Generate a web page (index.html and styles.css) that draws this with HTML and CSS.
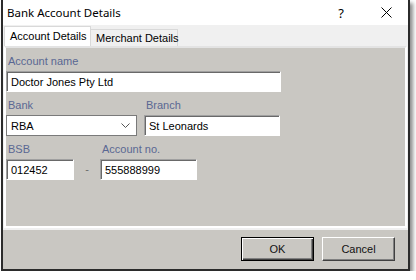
FILE: index.html
```html
<!DOCTYPE html>
<html lang="en">
<head>
    <meta charset="UTF-8">
    <title>Bank Account Details</title>
    <link rel="stylesheet" href="styles.css">
</head>
<body>
    <div class="window">
        <div class="titlebar">
            <span class="title">Bank Account Details</span>
            <span class="tb-btn help">?</span>
            <span class="tb-btn close">
                <svg width="11" height="11" viewBox="0 0 11 11"><path d="M0.5 0.5 L10.5 10.5 M10.5 0.5 L0.5 10.5" stroke="#000" stroke-width="1" fill="none"/></svg>
            </span>
        </div>

        <div class="tabs">
            <div class="tab active">Account Details</div>
            <div class="tab">Merchant Details</div>
        </div>

        <div class="panel">
            <div class="field">
                <label>Account name</label>
                <input class="text name" type="text" value="Doctor Jones Pty Ltd" readonly>
            </div>
            <div class="row">
                <div class="field">
                    <label>Bank</label>
                    <div class="select bank">
                        <span>RBA</span>
                        <svg width="9" height="5" viewBox="0 0 9 5"><path d="M0.5 0.5 L4.5 4.5 L8.5 0.5" stroke="#555" stroke-width="1" fill="none"/></svg>
                    </div>
                </div>
                <div class="field">
                    <label>Branch</label>
                    <input class="text branch" type="text" value="St Leonards" readonly>
                </div>
            </div>
            <div class="row">
                <div class="field">
                    <label>BSB</label>
                    <input class="text bsb" type="text" value="012452" readonly>
                </div>
                <span class="dash">-</span>
                <div class="field">
                    <label>Account no.</label>
                    <input class="text accno" type="text" value="555888999" readonly>
                </div>
            </div>
        </div>

        <div class="footer">
            <button class="btn default">OK</button>
            <button class="btn">Cancel</button>
        </div>
    </div>
</body>
</html>
```

FILE: styles.css
```css
body {
    margin: 0;
    padding-left: 1px;
    background-color: #fff;
    font-family: "Liberation Sans", Arial, sans-serif;
    font-size: 11px;
    color: #000;
}

.window {
    width: 409px;
    height: 271px;
    box-sizing: border-box;
    border: 2px solid #2b2b2b;
    border-top: none;
    background-color: #f0f0f0;
    box-shadow: 3px 3px 4px rgba(0,0,0,0.45);
    display: flex;
    flex-direction: column;
}

/* title bar */
.titlebar {
    height: 25px;
    background-color: #fff;
    display: flex;
    align-items: center;
}

.title {
    flex: 1;
    padding-left: 4px;
    font-family: "Noto Sans", sans-serif;
    font-size: 11.5px;
    color: #000;
}

.tb-btn {
    height: 25px;
    display: flex;
    align-items: center;
    justify-content: center;
}

.help {
    width: 46px;
    font-family: "Noto Sans", sans-serif;
    font-size: 13px;
}

.close {
    width: 44px;
}

/* tabs */
.tabs {
    height: 21px;
    padding-left: 1px;
    display: flex;
    align-items: flex-end;
}

.tab {
    width: 87px;
    box-sizing: border-box;
    border: 1px solid #d9d9d9;
    border-bottom: none;
    padding-left: 5px;
    white-space: nowrap;
}

.tab.active {
    height: 20px;
    line-height: 19px;
    background-color: #fff;
}

.tab:not(.active) {
    height: 17px;
    line-height: 17px;
    border-left: none;
    padding-left: 5px;
    background-color: #f0f0f0;
}

/* page */
.panel {
    height: 182px;
    margin: 0 1px;
    box-sizing: border-box;
    border: 2px solid #fff;
    border-top-color: #e3e3e3;
    background-color: #c9c7c2;
    padding-top: 7px;
    display: flex;
    flex-direction: column;
    gap: 7px;
}

.row {
    display: flex;
    gap: 7px;
}

.field {
    display: flex;
    flex-direction: column;
}

.field label {
    height: 14px;
    line-height: 13px;
    margin-bottom: 2px;
    padding-left: 2px;
    color: #5a6793;
}

.text {
    height: 21px;
    box-sizing: border-box;
    margin: 0;
    padding: 0 0 0 4px;
    border: 1px solid;
    border-color: #a0a0a0 #fff #fff #a0a0a0;
    box-shadow: inset 1px 1px 0 #696969;
    background-color: #fff;
    font-family: "Liberation Sans", Arial, sans-serif;
    font-size: 11px;
    color: #000;
    outline: none;
}

.name { width: 275px; }
.branch { width: 136px; }
.bsb { width: 68px; }
.accno { width: 97px; }

.select {
    width: 131px;
    height: 21px;
    box-sizing: border-box;
    border: 1px solid #7a7a7a;
    background-color: #fff;
    padding: 0 6px 0 4px;
    display: flex;
    align-items: center;
    justify-content: space-between;
}

.dash {
    width: 12px;
    align-self: flex-end;
    line-height: 21px;
    text-align: center;
    color: #6b6b6b;
}

/* buttons */
.footer {
    flex: 1;
    margin-top: 2px;
    background-color: #c9c7c2;
    padding: 7px 13px 0 0;
    display: flex;
    justify-content: flex-end;
    align-items: flex-start;
    gap: 8px;
}

.btn {
    width: 73px;
    height: 24px;
    margin: 0;
    padding: 0;
    border: 1px solid;
    border-color: #fff #404040 #404040 #fff;
    box-shadow: inset -1px -1px 0 #808080;
    background-color: #c9c7c2;
    font-family: "Liberation Sans", Arial, sans-serif;
    font-size: 11px;
    color: #111;
}

.btn.default {
    border-color: #000;
    box-shadow: inset 1px 1px 0 #fff, inset -1px -1px 0 #404040, inset -2px -2px 0 #808080;
}
```
